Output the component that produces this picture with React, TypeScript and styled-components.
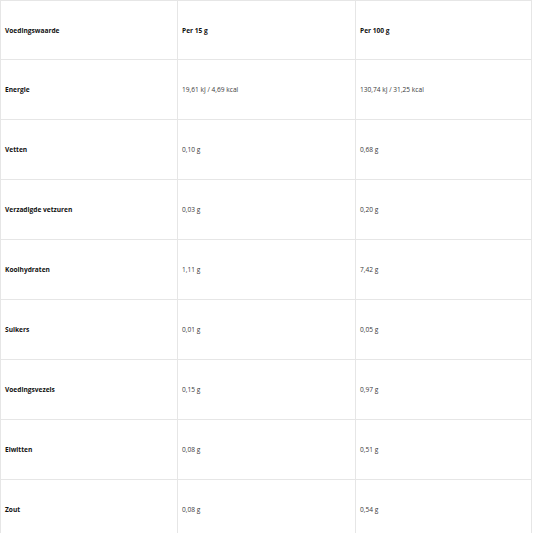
import React from "react";
import styled, { createGlobalStyle } from "styled-components";

const Global = createGlobalStyle`
  html, body { margin: 0; padding: 0; background: #fff; }
  body { font-family: "Open Sans", "Liberation Sans", sans-serif; }
`;

const Table = styled.table`
  width: 531px;
  border-collapse: collapse;
  table-layout: fixed;
  font-size: 6.6px;
  color: #3a3a3a;
`;

const Col = styled.col<{ $w: number }>`
  width: ${(p) => p.$w}px;
`;

const Cell = styled.td<{ $bold?: boolean; $first?: boolean }>`
  border: 1px solid #e6e6e6;
  height: ${(p) => (p.$first ? 59 : 60)}px;
  padding: 0 4px;
  box-sizing: border-box;
  vertical-align: middle;
  font-weight: ${(p) => (p.$bold ? 700 : 400)};
  color: ${(p) => (p.$bold ? "#111" : "#3a3a3a")};
`;

const rows: [string, string, string][] = [
  ["Energie", "19,61 kJ / 4,69 kcal", "130,74 kJ / 31,25 kcal"],
  ["Vetten", "0,10 g", "0,68 g"],
  ["Verzadigde vetzuren", "0,03 g", "0,20 g"],
  ["Koolhydraten", "1,11 g", "7,42 g"],
  ["Suikers", "0,01 g", "0,05 g"],
  ["Voedingsvezels", "0,15 g", "0,97 g"],
  ["Eiwitten", "0,08 g", "0,51 g"],
  ["Zout", "0,08 g", "0,54 g"],
];

export default function App() {
  return (
    <>
      <Global />
      <Table>
        <colgroup>
          <Col $w={177} />
          <Col $w={178} />
          <Col $w={176} />
        </colgroup>
        <tbody>
          <tr>
            <Cell $bold $first>Voedingswaarde</Cell>
            <Cell $bold $first>Per 15 g</Cell>
            <Cell $bold $first>Per 100 g</Cell>
          </tr>
          {rows.map(([a, b, c]) => (
            <tr key={a}>
              <Cell $bold>{a}</Cell>
              <Cell>{b}</Cell>
              <Cell>{c}</Cell>
            </tr>
          ))}
        </tbody>
      </Table>
    </>
  );
}
